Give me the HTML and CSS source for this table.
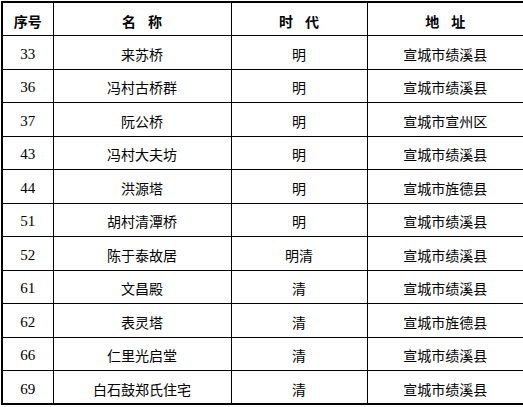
FILE: index.html
```html
<!DOCTYPE html>
<html lang="zh">
<head>
<meta charset="utf-8">
<link rel="stylesheet" href="styles.css">
</head>
<body>
<table class="list">
  <colgroup>
    <col class="c-no"><col class="c-name"><col class="c-era"><col class="c-addr">
  </colgroup>
  <thead>
    <tr><th>序号</th><th><span class="sp">名</span>称</th><th><span class="sp">时</span>代</th><th><span class="sp">地</span>址</th></tr>
  </thead>
  <tbody>
    <tr><td class="num">33</td><td>来苏桥</td><td>明</td><td>宣城市绩溪县</td></tr>
    <tr><td class="num">36</td><td>冯村古桥群</td><td>明</td><td>宣城市绩溪县</td></tr>
    <tr><td class="num">37</td><td>阮公桥</td><td>明</td><td>宣城市宣州区</td></tr>
    <tr><td class="num">43</td><td>冯村大夫坊</td><td>明</td><td>宣城市绩溪县</td></tr>
    <tr><td class="num">44</td><td>洪源塔</td><td>明</td><td>宣城市旌德县</td></tr>
    <tr><td class="num">51</td><td>胡村清潭桥</td><td>明</td><td>宣城市绩溪县</td></tr>
    <tr><td class="num">52</td><td>陈于泰故居</td><td>明清</td><td>宣城市绩溪县</td></tr>
    <tr><td class="num">61</td><td>文昌殿</td><td>清</td><td>宣城市绩溪县</td></tr>
    <tr><td class="num">62</td><td>表灵塔</td><td>清</td><td>宣城市旌德县</td></tr>
    <tr><td class="num">66</td><td>仁里光启堂</td><td>清</td><td>宣城市绩溪县</td></tr>
    <tr><td class="num">69</td><td>白石鼓郑氏住宅</td><td>清</td><td>宣城市绩溪县</td></tr>
  </tbody>
</table>
</body>
</html>
```
FILE: styles.css
```css
html, body {
  margin: 0;
  padding: 0;
  background: #ffffff;
}
body {
  padding: 1px 0 0 1px;
  font-family: "Noto Sans CJK SC", sans-serif;
  font-size: 14px;
  color: #000;
}
.list {
  border-collapse: collapse;
  table-layout: fixed;
  width: 522px;
  border: 2px solid #000;
}
.c-no { width: 51px; }
.c-name { width: 178px; }
.c-era { width: 136px; }
.c-addr { width: 157px; }
.list th, .list td {
  border: 1px solid #000;
  height: 33.5px;
  padding: 3px 0 0 0;
  box-sizing: border-box;
  text-align: center;
  vertical-align: middle;
  line-height: 20px;
  white-space: nowrap;
}
.list th {
  font-weight: bold;
  font-size: 14px;
}
.sp {
  margin-right: 12px;
}
.num {
  font-family: "Liberation Serif", serif;
  font-size: 15px;
}
```
